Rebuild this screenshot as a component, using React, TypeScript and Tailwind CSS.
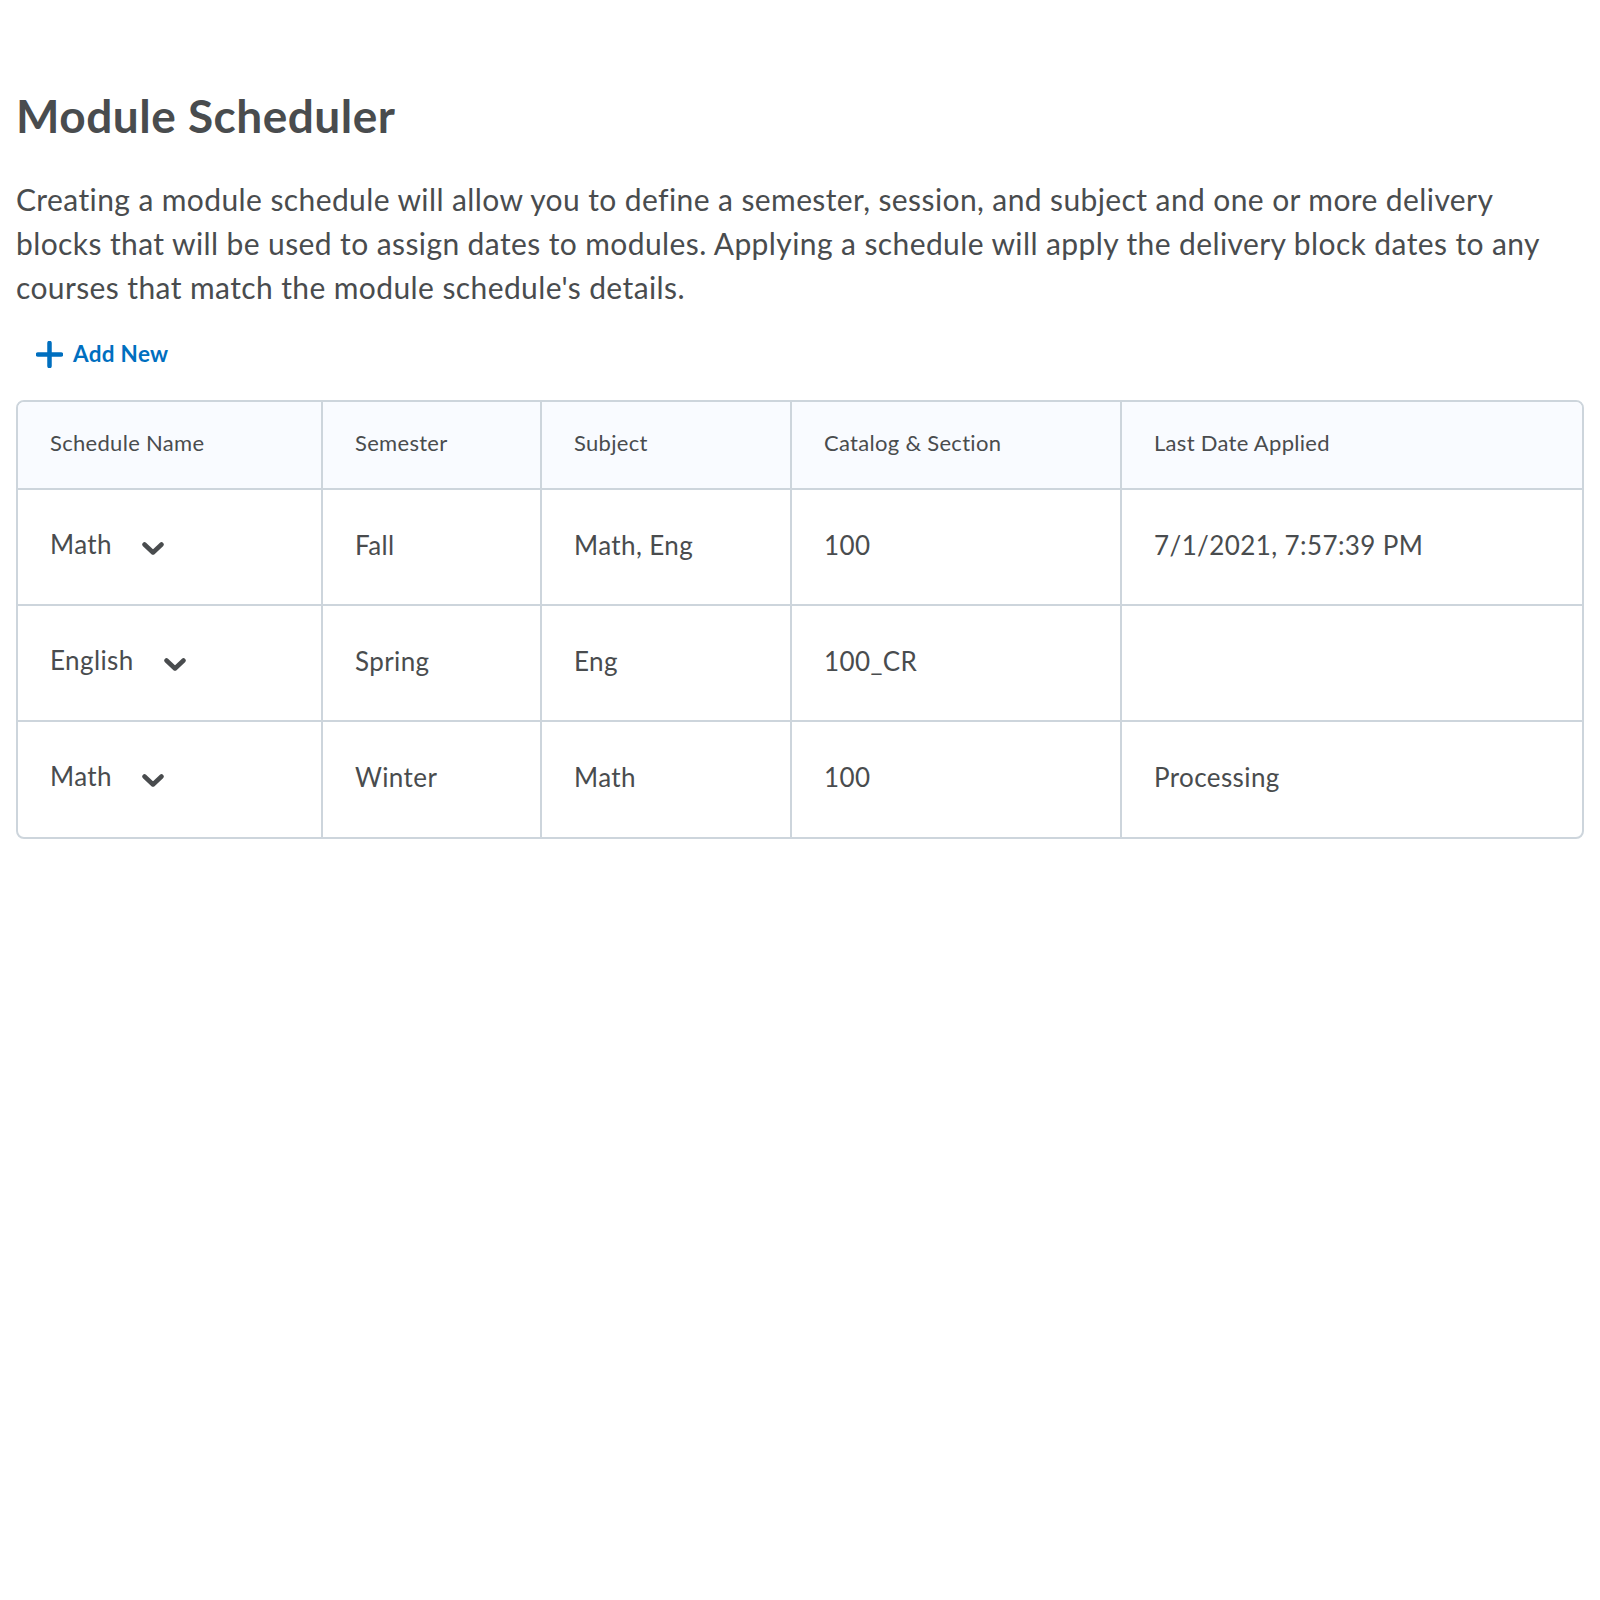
import React from "react";

const rows = [
  { name: "Math", semester: "Fall", subject: "Math, Eng", catalog: "100", applied: "7/1/2021, 7:57:39 PM" },
  { name: "English", semester: "Spring", subject: "Eng", catalog: "100_CR", applied: "" },
  { name: "Math", semester: "Winter", subject: "Math", catalog: "100", applied: "Processing" },
];

const cols = ["w-[304px]", "w-[219px]", "w-[250px]", "w-[330px]", ""];

function Chevron() {
  return (
    <svg width="22" height="13" viewBox="0 0 22 13" className="mt-[8px] shrink-0">
      <polyline points="2.5,2.5 11,10.5 19.5,2.5" fill="none" stroke="#494c4e" strokeWidth="4.5" strokeLinecap="round" strokeLinejoin="round" />
    </svg>
  );
}

export default function App() {
  return (
    <div className="px-[16px] pt-[88px] text-[#494c4e] font-['Lato','Open_Sans',sans-serif]">
      <h1 className="text-[46px] leading-[1.2] font-bold tracking-[0.5px]">Module Scheduler</h1>

      <p className="mt-[34px] max-w-[1540px] text-[30px] leading-[44px] tracking-[0.4px]">
        Creating a module schedule will allow you to define a semester, session, and subject and one or more delivery
        blocks that will be used to assign dates to modules. Applying a schedule will apply the delivery block dates to any
        courses that match the module schedule's details.
      </p>

      <button className="mt-[30px] ml-[20px] flex items-center gap-[10px] text-[#006fbf] text-[22.5px] font-bold leading-[30px] tracking-[0.3px]">
        <svg width="27" height="27" viewBox="0 0 27 27">
          <path d="M13.5 2v23M2 13.5h23" stroke="#006fbf" strokeWidth="4.5" strokeLinecap="round" />
        </svg>
        Add New
      </button>

      <div className="mt-[31px] border-2 border-[#cdd5dc] rounded-[8px] overflow-hidden">
        <table className="w-full border-collapse table-fixed">
          <thead>
            <tr className="bg-[#f9fbff] h-[87px]">
              {["Schedule Name", "Semester", "Subject", "Catalog & Section", "Last Date Applied"].map((h, i) => (
                <th
                  key={h}
                  className={`${cols[i]} text-left font-normal text-[22px] tracking-[0.3px] pl-[32px] pb-[6px] border-b-2 border-[#cdd5dc] ${i < 4 ? "border-r-2" : ""}`}
                >
                  {h}
                </th>
              ))}
            </tr>
          </thead>
          <tbody className="text-[26px] tracking-[0.4px]">
            {rows.map((r, idx) => (
              <tr key={idx} className="h-[116px]">
                <td className={`pl-[32px] border-r-2 border-[#cdd5dc] ${idx < 2 ? "border-b-2" : ""}`}>
                  <div className="flex items-center gap-[30px] -mt-[6px]">
                    <span>{r.name}</span>
                    <Chevron />
                  </div>
                </td>
                <td className={`pl-[32px] pb-[4px] border-r-2 border-[#cdd5dc] ${idx < 2 ? "border-b-2" : ""}`}>{r.semester}</td>
                <td className={`pl-[32px] pb-[4px] border-r-2 border-[#cdd5dc] ${idx < 2 ? "border-b-2" : ""}`}>{r.subject}</td>
                <td className={`pl-[32px] pb-[4px] border-r-2 border-[#cdd5dc] ${idx < 2 ? "border-b-2" : ""}`}>{r.catalog}</td>
                <td className={`pl-[32px] pb-[4px] border-[#cdd5dc] ${idx < 2 ? "border-b-2" : ""}`}>{r.applied}</td>
              </tr>
            ))}
          </tbody>
        </table>
      </div>
    </div>
  );
}
